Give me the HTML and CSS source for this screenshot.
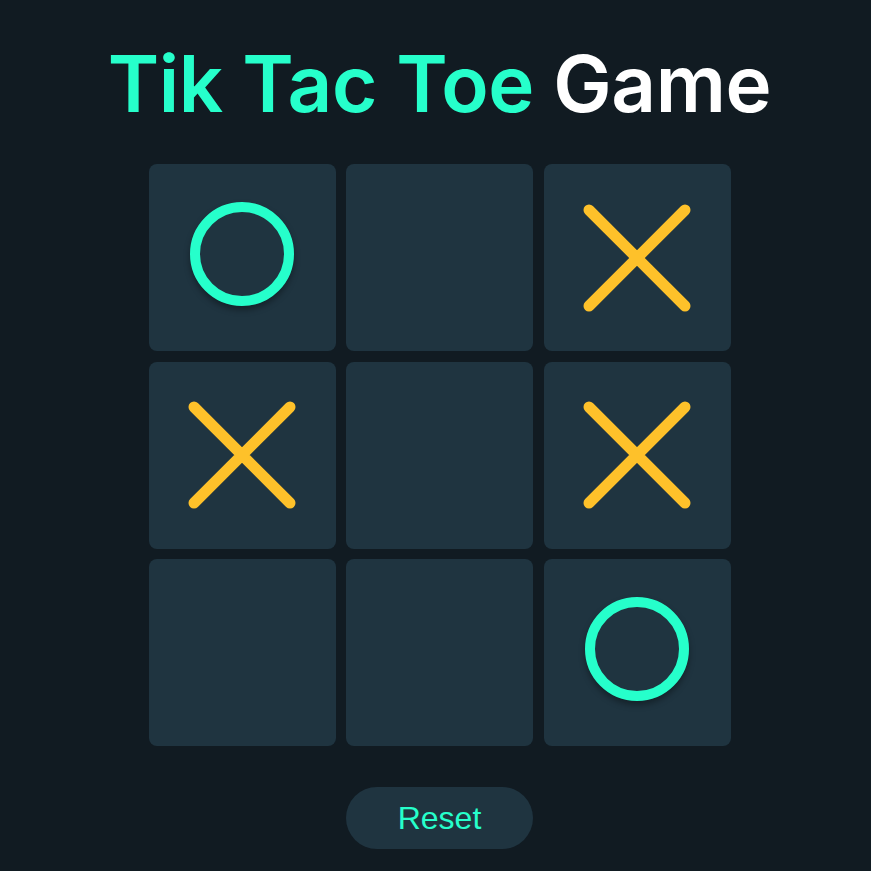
FILE: index.html
```html
<!DOCTYPE html>
<html lang="en">
<head>
<meta charset="utf-8">
<title>Tik Tac Toe Game</title>
<link rel="stylesheet" href="styles.css">
</head>
<body>
<main class="app">
  <h1 class="title"><span class="title-accent">Tik Tac Toe</span> Game</h1>
  <div class="board">
    <div class="cell"><span class="mark-o"></span></div>
    <div class="cell"></div>
    <div class="cell"><svg class="mark-x" viewBox="0 0 108 108"><path d="M6 6 L102 102 M102 6 L6 102"/></svg></div>
    <div class="cell"><svg class="mark-x" viewBox="0 0 108 108"><path d="M6 6 L102 102 M102 6 L6 102"/></svg></div>
    <div class="cell"></div>
    <div class="cell"><svg class="mark-x" viewBox="0 0 108 108"><path d="M6 6 L102 102 M102 6 L6 102"/></svg></div>
    <div class="cell"></div>
    <div class="cell"></div>
    <div class="cell"><span class="mark-o"></span></div>
  </div>
  <button class="reset">Reset</button>
</main>
</body>
</html>
```
FILE: styles.css
```css
html, body {
  margin: 0;
  padding: 0;
  background: #111b22;
}

.app {
  box-sizing: border-box;
  min-height: 871px;
  padding: 44px 0 0 8px;
  display: flex;
  flex-direction: column;
  align-items: center;
}

.title {
  margin: 0;
  font-family: "Inter", "Noto Sans", sans-serif;
  font-weight: 600;
  font-size: 78px;
  line-height: 80px;
  color: #ffffff;
  letter-spacing: -0.4px;
}

.title-accent {
  color: #26ffcb;
}

.board {
  margin-top: 40px;
  display: grid;
  grid-template-columns: repeat(3, 187px);
  grid-template-rows: repeat(3, 187px);
  gap: 10.5px;
}

.cell {
  background: #1f3440;
  border-radius: 8px;
  display: flex;
  align-items: center;
  justify-content: center;
}

.mark-o {
  box-sizing: border-box;
  width: 104px;
  height: 104px;
  border: 10px solid #26ffcb;
  border-radius: 50%;
  margin-bottom: 8px;
  box-shadow: 0 4px 6px rgba(0, 0, 0, 0.35);
}

.mark-x {
  width: 108px;
  height: 108px;
}

.mark-x path {
  stroke: #fec12a;
  stroke-width: 11;
  stroke-linecap: round;
  fill: none;
}

.reset {
  margin-top: 41px;
  width: 187px;
  height: 62px;
  border: none;
  border-radius: 31px;
  background: #1f3440;
  color: #26ffcb;
  font-family: "Liberation Sans", Arial, sans-serif;
  font-size: 32px;
  padding: 0;
  cursor: pointer;
}
```
